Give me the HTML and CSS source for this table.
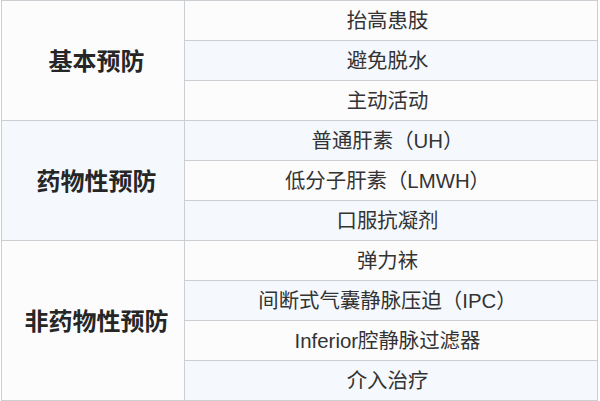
FILE: index.html
```html
<!DOCTYPE html>
<html lang="zh-CN">
<head>
<meta charset="utf-8">
<title>预防措施</title>
<link rel="stylesheet" href="styles.css">
</head>
<body>
<table class="prev-table">
  <tbody>
    <tr class="odd">
      <td class="group" rowspan="3">基本预防</td>
      <td class="item">抬高患肢</td>
    </tr>
    <tr class="even"><td class="item">避免脱水</td></tr>
    <tr class="odd"><td class="item">主动活动</td></tr>
    <tr class="even">
      <td class="group" rowspan="3">药物性预防</td>
      <td class="item">普通肝素（UH）</td>
    </tr>
    <tr class="odd"><td class="item">低分子肝素（LMWH）</td></tr>
    <tr class="even"><td class="item">口服抗凝剂</td></tr>
    <tr class="odd">
      <td class="group" rowspan="4">非药物性预防</td>
      <td class="item">弹力袜</td>
    </tr>
    <tr class="even"><td class="item">间断式气囊静脉压迫（IPC）</td></tr>
    <tr class="odd"><td class="item">Inferior腔静脉过滤器</td></tr>
    <tr class="even"><td class="item">介入治疗</td></tr>
  </tbody>
</table>
</body>
</html>
```

FILE: styles.css
```css
html, body {
  margin: 0;
  padding: 0;
  background: #ffffff;
}

.prev-table {
  margin-left: 1px;
  width: 597px;
  border-collapse: collapse;
  table-layout: fixed;
  font-family: "Liberation Sans", "Noto Sans CJK SC", sans-serif;
  color: #333333;
}

.prev-table td {
  border: 1px solid #cbced2;
  padding: 0;
  text-align: center;
  vertical-align: middle;
  line-height: 1;
}

.prev-table tr.odd td {
  background: #fcfcfd;
}

.prev-table tr.even td {
  background: #f5f9fe;
}

.group {
  width: 175px;
  padding-left: 7px !important;
  padding-top: 2px !important;
  font-size: 24px;
  font-weight: bold;
  color: #262626;
}

.item {
  height: 37px;
  padding-right: 7px !important;
  padding-top: 2px !important;
  font-size: 20.4px;
}
```
